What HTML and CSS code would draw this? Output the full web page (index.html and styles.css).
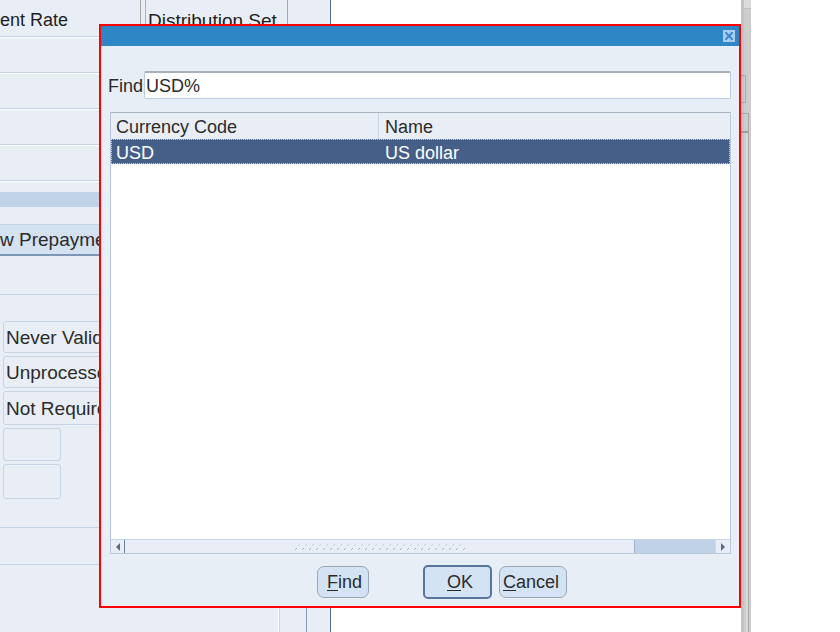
FILE: index.html
```html
<!DOCTYPE html>
<html>
<head>
<meta charset="utf-8">
<title>Currencies</title>
<link rel="stylesheet" href="styles.css">
</head>
<body>
<div class="screen">
  <div class="form">
    <div class="hdr">
      <div class="hcell hcell-rate">ent Rate</div>
      <div class="hcell hcell-dist">Distribution Set</div>
    </div>
    <div class="row"></div>
    <div class="row"></div>
    <div class="row"></div>
    <div class="row"></div>
    <div class="row row-end"></div>
    <div class="band"></div>
    <div class="prepay">w Prepayments</div>
    <div class="sep"></div>
    <div class="fields">
      <div class="fld fld-a">Never Validated</div>
      <div class="fld fld-a">Unprocessed</div>
      <div class="fld fld-b">Not Required</div>
      <div class="fld fld-small fld-c"></div>
      <div class="fld fld-small fld-d"></div>
    </div>
    <div class="hline hline-1"></div>
    <div class="hline hline-2"></div>
    <div class="foot">
      <div class="vl vl-1"></div>
      <div class="vl vl-2"></div>
    </div>
  </div>
  <div class="canvas">
    <div class="strip">
      <div class="strip-top"></div>
      <div class="strip-box strip-box-1"></div>
      <div class="strip-box strip-box-2"></div>
      <div class="strip-rail"></div>
    </div>
  </div>

  <div class="dialog">
    <div class="titlebar">
      <div class="close">
        <svg width="12" height="12" viewBox="0 0 12 12">
          <rect x="0" y="0" width="12" height="12" fill="#a9cdee"/>
          <path d="M3 3 L9 9 M9 3 L3 9" stroke="#3a89d0" stroke-width="2" fill="none"/>
          <path d="M2 2h2v1h-2z M8 2h2v1h-2z M2 9h2v1h-2z M8 9h2v1h-2z" fill="#3a89d0"/>
        </svg>
      </div>
    </div>
    <div class="findrow">
      <span class="findlabel">Find</span>
      <div class="findfield">USD%</div>
    </div>
    <div class="table">
      <div class="thead">
        <div class="c1">Currency Code</div>
        <div class="c2">Name</div>
      </div>
      <div class="trow sel">
        <div class="c1">USD</div>
        <div class="c2">US dollar</div>
      </div>
      <div class="tbody"></div>
      <div class="hscroll">
        <div class="sb-left"><span class="tri-l"></span></div>
        <div class="sb-thumb">
          <svg class="grip" width="172" height="9">
            <defs>
              <pattern id="g" width="7" height="9" patternUnits="userSpaceOnUse">
                <path d="M1 8 L2 7 M2 7 L3 6" stroke="#a9b5c5" stroke-width="1" fill="none"/>
                <path d="M4 4 L5 3 M5 3 L6 2" stroke="#c3ccd8" stroke-width="1" fill="none"/>
              </pattern>
            </defs>
            <rect width="172" height="9" fill="url(#g)"/>
          </svg>
        </div>
        <div class="sb-track"></div>
        <div class="sb-right"><span class="tri-r"></span></div>
      </div>
    </div>
    <div class="buttons">
      <button class="btn btn-find"><u>F</u>ind</button>
      <button class="btn btn-ok"><u>O</u>K</button>
      <button class="btn btn-cancel"><u>C</u>ancel</button>
    </div>
  </div>
</div>
</body>
</html>
```

FILE: styles.css
```css
* { box-sizing: border-box; }
html, body { margin: 0; padding: 0; }
body {
  width: 840px;
  height: 632px;
  overflow: hidden;
  background: #ffffff;
  font-family: "Liberation Sans", Arial, sans-serif;
  font-size: 18px;
  color: #2b2b2b;
}
.screen {
  position: relative;
  display: flex;
  width: 840px;
  height: 632px;
}

/* background form */
.form {
  width: 331px;
  height: 632px;
  background: #e9eef6;
  border-right: 1px solid #4a6894;
  display: flex;
  flex-direction: column;
  overflow: hidden;
  flex: none;
  font-size: 19px;
}
.hdr {
  display: flex;
  height: 36px;
  flex: none;
}
.hcell {
  height: 36px;
  padding-top: 5px;
  line-height: 31px;
  white-space: nowrap;
  overflow: hidden;
  color: #1e1e1e;
}
.hcell-rate {
  width: 141px;
  border-right: 1px solid #a9a9a9;
  font-size: 18px;
}
.hcell-dist {
  margin-left: 4px;
  width: 143px;
  border-left: 1px solid #b1b1b1;
  border-right: 1px solid #a9a9a9;
  padding-left: 2px;
}
.row {
  height: 36px;
  flex: none;
  border-top: 1px solid #c3d2e6;
  box-shadow: inset 0 1px 0 #ffffff;
}
.row-end { height: 12px; }
.band {
  height: 15px;
  flex: none;
  background: #c1d3e8;
}
.prepay {
  margin-top: 17px;
  height: 32px;
  width: 220px;
  flex: none;
  background: #d3e1f0;
  border-top: 1px solid #c3d3e6;
  border-bottom: 2px solid #7e97b9;
  padding-top: 1px;
  line-height: 28px;
  white-space: nowrap;
}
.sep {
  margin-top: 38px;
  height: 1px;
  flex: none;
  background: #c5d3e6;
}
.fields {
  margin-top: 26px;
  margin-left: 3px;
  display: flex;
  flex-direction: column;
  gap: 3px;
  flex: none;
}
.fld {
  width: 160px;
  border: 1px solid #c6d4e6;
  border-radius: 3px;
  background: #e9eef6;
  padding-left: 2px;
  padding-top: 2px;
  white-space: nowrap;
}
.fld-a { height: 32px; line-height: 28px; }
.fld-b { height: 34px; line-height: 30px; }
.fld-small { width: 58px; }
.fld-c { height: 33px; }
.fld-d { height: 35px; }
.hline {
  height: 1px;
  flex: none;
  background: #c5d3e6;
}
.hline-1 { margin-top: 28px; }
.hline-2 { margin-top: 36px; }
.foot {
  flex: 1;
  display: flex;
  padding-left: 278px;
}
.vl { height: 100%; flex: none; }
.vl-1 {
  width: 2px;
  border-left: 1px solid #ffffff;
  border-right: 1px solid #c3d1e4;
}
.vl-2 {
  margin-left: 26px;
  width: 1px;
  background: #8199bc;
}

/* right canvas */
.canvas {
  flex: 1;
  background: #ffffff;
  display: flex;
}
.strip {
  margin-left: 410px;
  width: 10px;
  height: 632px;
  background: #cdcdcd;
  border-left: 3px solid #c3c3c3;
  position: relative;
  display: flex;
  flex-direction: column;
}
.strip-top {
  height: 9px;
  background: #dcdcdc;
  border-bottom: 1px solid #c0c0c0;
}
.strip-box {
  margin-left: -3px;
  border: 1px solid #a9a9a9;
  border-left: none;
}
.strip-box-1 { margin-top: 66px; width: 5px; height: 28px; }
.strip-box-2 { margin-top: 10px; width: 8px; height: 20px; border-bottom: 2px solid #a0a0a0; }
.strip-rail {
  flex: 1;
  margin-left: 2px;
  width: 3px;
  border-right: 1px solid #a9a9a9;
  background: #dadada;
}

/* dialog */
.dialog {
  position: absolute;
  left: 99px;
  top: 24px;
  width: 642px;
  height: 584px;
  border: 2px solid #ff0000;
  background: #e8eef6;
  display: flex;
  flex-direction: column;
}
.titlebar {
  height: 20px;
  flex: none;
  background: #2e86c5;
  display: flex;
  justify-content: flex-end;
  align-items: flex-start;
  padding-top: 4px;
  padding-right: 4px;
}
.close { width: 12px; height: 12px; display: flex; }
.findrow {
  margin-top: 25px;
  display: flex;
  align-items: center;
  padding-left: 7px;
  padding-right: 8px;
  flex: none;
}
.findlabel {
  width: 36px;
  padding-top: 2px;
}
.findfield {
  flex: 1;
  height: 28px;
  background: #ffffff;
  border: 1px solid #bccbdf;
  border-top: 2px solid #a7afb9;
  border-radius: 2px;
  padding-left: 1px;
  line-height: 26px;
}
.table {
  margin: 13px 8px 0 9px;
  height: 442px;
  flex: none;
  border: 1px solid #b9c9dd;
  border-top-color: #a9b4c3;
  display: flex;
  flex-direction: column;
  background: #ffffff;
}
.thead {
  height: 26px;
  flex: none;
  display: flex;
  background: #e9eef6;
  padding-top: 3px;
  line-height: 23px;
}
.thead .c1 { border-right: 1px solid #c7d4e5; margin-top: -3px; padding-top: 3px; }
.c1 {
  width: 268px;
  padding-left: 5px;
  white-space: nowrap;
}
.c2 {
  padding-left: 6px;
  white-space: nowrap;
}
.trow {
  height: 25px;
  flex: none;
  display: flex;
}
.sel {
  background: #465f89;
  color: #ffffff;
  border: 1px dotted #c9d2df;
  padding-top: 3px;
  line-height: 21px;
}
.sel .c1 { width: 267px; padding-left: 4px; }
.tbody { flex: 1; }
.hscroll {
  height: 14px;
  flex: none;
  display: flex;
  border-top: 1px solid #c6d4e6;
  background: #e9eef6;
}
.sb-left {
  width: 14px;
  border-right: 1px solid #6e839f;
  display: flex;
  align-items: center;
  justify-content: center;
  border-radius: 0 0 0 5px;
}
.tri-l {
  width: 0; height: 0;
  border-top: 4px solid transparent;
  border-bottom: 4px solid transparent;
  border-right: 4px solid #5b6b82;
}
.sb-thumb {
  width: 509px;
  display: flex;
  align-items: center;
  justify-content: center;
  padding-left: 1px;
}
.grip { display: block; }
.sb-track {
  width: 81px;
  background: #c0d2e7;
  border-left: 1px solid #9fb3cd;
}
.sb-right {
  flex: 1;
  display: flex;
  align-items: center;
  justify-content: center;
  border-left: 1px solid #ccd8e7;
  border-radius: 0 0 5px 0;
}
.tri-r {
  width: 0; height: 0;
  border-top: 4px solid transparent;
  border-bottom: 4px solid transparent;
  border-left: 4px solid #5b6b82;
}
.buttons {
  margin-top: 11px;
  padding-left: 216px;
  display: flex;
  align-items: center;
  height: 34px;
  flex: none;
}
.btn {
  font-family: "Liberation Sans", Arial, sans-serif;
  font-size: 18px;
  color: #2b2b2b;
  background: #d3e3f4;
  border: 1px solid #9aa7b6;
  border-radius: 7px;
  height: 32px;
  margin: 0;
  padding: 1px 0 0 0;
  text-align: left;
  line-height: 29px;
}
.btn u { text-underline-offset: 2px; }
.btn-find { width: 52px; padding-left: 9px; }
.btn-ok {
  width: 69px;
  height: 34px;
  margin-left: 54px;
  border: 2px solid #58759c;
  border-radius: 5px;
  padding-left: 22px;
}
.btn-cancel { width: 68px; margin-left: 7px; padding-left: 3px; }
```
